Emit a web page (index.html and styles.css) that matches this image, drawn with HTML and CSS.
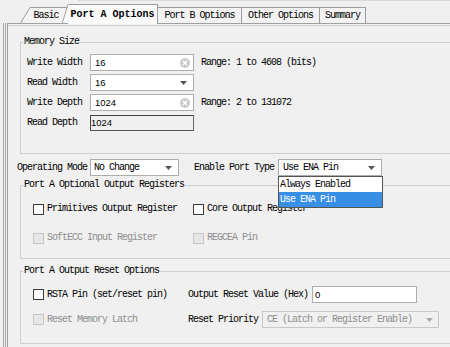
FILE: index.html
```html
<!DOCTYPE html>
<html>
<head>
<meta charset="utf-8">
<link rel="stylesheet" href="styles.css">
</head>
<body>
<div class="topline"></div>
<div class="tabs">
  <svg class="slant" width="10" height="16" viewBox="0 0 10 16"><polygon points="0,16 10,0 10,16" fill="#f3f3f3"/><path d="M0.5 16 L10 0.5" stroke="#9c9c9c" fill="none"/></svg>
  <div class="tab tab-basic">Basic</div>
  <svg class="slant" width="6" height="19" viewBox="0 0 6 19"><polygon points="0,3 5,3 0,19" fill="#f3f3f3"/><path d="M0 3.5 H5" stroke="#9c9c9c"/><polygon points="0,19 6,0 6,19" fill="#fafafa"/><path d="M0.3 19 L6 0.5" stroke="#9c9c9c" fill="none"/></svg>
  <div class="tab tab-sel">Port A Options</div>
  <div class="tab tab-b">Port B Options</div>
  <div class="tab tab-other">Other Options</div>
  <div class="tab tab-sum">Summary</div>
</div>
<div class="panel">
  <fieldset class="group mem">
    <legend>Memory Size</legend>
    <div class="rows">
      <span>Write Width</span>
      <div class="field"><span class="val">16</span><svg class="clear" width="10" height="10" viewBox="0 0 10 10"><circle cx="5" cy="5" r="5" fill="#cbcbcb"/><path d="M3 3L7 7M7 3L3 7" stroke="#fff" stroke-width="1.3"/></svg></div>
      <span class="range">Range: 1 to 4608 (bits)</span>
      <span>Read Width</span>
      <div class="sel"><span class="val">16</span><svg width="7" height="4" viewBox="0 0 7 4"><path d="M0 0H7L3.5 4Z" fill="#555"/></svg></div>
      <span></span>
      <span>Write Depth</span>
      <div class="field"><span class="val">1024</span><svg class="clear" width="10" height="10" viewBox="0 0 10 10"><circle cx="5" cy="5" r="5" fill="#cbcbcb"/><path d="M3 3L7 7M7 3L3 7" stroke="#fff" stroke-width="1.3"/></svg></div>
      <span class="range">Range: 2 to 131072</span>
      <span>Read Depth</span>
      <div class="ro"><span class="val">1024</span></div>
      <span></span>
    </div>
  </fieldset>

  <div class="oprow">
    <span>Operating Mode</span>
    <div class="sel sel-op"><span>No Change</span><svg width="7" height="4" viewBox="0 0 7 4"><path d="M0 0H7L3.5 4Z" fill="#555"/></svg></div>
    <span class="lbl-enable">Enable Port Type</span>
    <div class="combo">
      <div class="sel sel-en"><span>Use ENA Pin</span><svg width="7" height="4" viewBox="0 0 7 4"><path d="M0 0H7L3.5 4Z" fill="#555"/></svg></div>
      <div class="popup">
        <div class="opt">Always Enabled</div>
        <div class="opt hl">Use ENA Pin</div>
      </div>
    </div>
  </div>

  <fieldset class="group optg">
    <legend>Port A Optional Output Registers</legend>
    <div class="checks">
      <label class="chk"><span class="cb"></span>Primitives Output Register</label>
      <label class="chk"><span class="cb"></span>Core Output Register</label>
      <label class="chk dis"><span class="cb"></span>SoftECC Input Register</label>
      <label class="chk dis"><span class="cb"></span>REGCEA Pin</label>
    </div>
  </fieldset>

  <fieldset class="group resetg">
    <legend>Port A Output Reset Options</legend>
    <div class="resets">
      <label class="chk"><span class="cb"></span>RSTA Pin (set/reset pin)</label>
      <div class="pair"><span>Output Reset Value (Hex)</span><div class="field field-hex"><span class="val">0</span></div></div>
      <label class="chk dis"><span class="cb"></span>Reset Memory Latch</label>
      <div class="pair"><span>Reset Priority</span><div class="sel sel-dis"><span>CE (Latch or Register Enable)</span><svg width="7" height="4" viewBox="0 0 7 4"><path d="M0 0H7L3.5 4Z" fill="#a8a8a8"/></svg></div></div>
    </div>
  </fieldset>
</div>
</body>
</html>
```
FILE: styles.css
```css
html, body {
  margin: 0;
  padding: 0;
}
body {
  background: #f0f0f0;
  width: 450px;
  height: 347px;
  overflow: hidden;
  font-family: "Liberation Mono", monospace;
  font-size: 10px;
  letter-spacing: -1px;
  line-height: 12px;
  color: #000;
}
.topline {
  margin-left: 78px;
  border-top: 1px solid #d8d8d8;
}
.tabs {
  display: flex;
  align-items: flex-end;
  height: 22px;
  padding-left: 20px;
}
.slant {
  display: block;
  flex: none;
}
.tab {
  box-sizing: border-box;
  flex: none;
  height: 16px;
  border-top: 1px solid #9c9c9c;
  border-right: 1px solid #9c9c9c;
  background: #f3f3f3;
  text-align: center;
  line-height: 15px;
}
.tab-basic { width: 32px; border-right: none; }
.tab-sel {
  width: 90px;
  height: 20px;
  margin-bottom: -1px;
  position: relative;
  z-index: 1;
  background: #fafafa;
  font-weight: bold;
  letter-spacing: 0;
  line-height: 19px;
}
.tab-b { width: 84px; }
.tab-other { width: 78px; }
.tab-sum { width: 46px; }

.panel {
  margin-left: 7px;
  width: 442px;
  height: 323px;
  overflow: hidden;
  border-left: 1px solid #a0a0a0;
  border-top: 1px solid #a0a0a0;
  box-shadow: -1px 0 0 #f0f0f0, -2px 0 0 #a8a8a8, -3px 0 0 #f0f0f0, -4px 0 0 #a8a8a8,
    inset 0 1px 0 #f0f0f0, inset 0 2px 0 #cfcfcf;
}
.group {
  margin: 0 0 0 12px;
  padding: 0;
  width: 440px;
  box-sizing: border-box;
  min-width: 0;
  border: 1px solid #cdcdcd;
}
.group legend {
  margin-left: 2px;
  padding: 0 1px;
  line-height: 12px;
}
.mem { margin-top: 12px; }
.rows {
  display: grid;
  grid-template-columns: 63px 104px auto;
  grid-auto-rows: 17px;
  row-gap: 3px;
  align-items: center;
  padding: 6px 0 22px 6px;
}
.range { margin-left: 7px; }
.field, .sel, .ro {
  box-sizing: border-box;
  height: 17px;
  display: flex;
  align-items: center;
  background: #fff;
  border: 1px solid #adadad;
}
.field {
  justify-content: space-between;
  padding: 0 3px 0 4px;
}
.val {
  font-family: "Liberation Sans", sans-serif;
  font-size: 9.5px;
  letter-spacing: 0;
}
.clear { display: block; flex: none; }
.sel {
  justify-content: space-between;
  padding: 0 6px 0 4px;
}
.sel svg { display: block; flex: none; }
.ro {
  height: 16px;
  background: #f0f0f0;
  border: 1px solid #444;
  border-right-color: #666;
  border-bottom-color: #555;
  align-items: flex-end;
  padding: 0 0 1px 0;
}

.oprow {
  display: flex;
  align-items: center;
  height: 17px;
  margin-top: 5px;
  padding-left: 9px;
}
.sel-op {
  width: 89px;
  margin-left: 3px;
  padding-left: 3px;
}
.lbl-enable { margin-left: 15px; }
.combo {
  position: relative;
  margin-left: 4px;
}
.sel-en { width: 104px; }
.popup {
  position: absolute;
  left: 0;
  top: 100%;
  width: 105px;
  box-sizing: border-box;
  border: 1px solid #555;
  background: #fff;
  z-index: 2;
}
.opt {
  height: 15px;
  line-height: 15px;
  padding-left: 1px;
}
.opt.hl {
  background: #3790e6;
  color: #fff;
}

.optg { margin-top: 3px; }
.checks {
  display: grid;
  grid-template-columns: 160px auto;
  grid-auto-rows: 12px;
  row-gap: 17px;
  padding: 12px 0 14px 12px;
}
.chk {
  display: flex;
  align-items: center;
  white-space: nowrap;
}
.cb {
  box-sizing: border-box;
  width: 11px;
  height: 11px;
  flex: none;
  border: 1px solid #3a3a3a;
  background: #fff;
  margin-right: 3px;
}
.chk.dis { color: #8e8e8e; }
.chk.dis .cb {
  border-color: #c6c6c6;
  background: #e6e6e6;
}

.resetg { margin-top: 6px; }
.resets {
  display: grid;
  grid-template-columns: 155px auto;
  grid-auto-rows: 17px;
  row-gap: 8px;
  align-items: center;
  padding: 9px 0 15px 12px;
}
.pair {
  display: flex;
  align-items: center;
  white-space: nowrap;
}
.field-hex {
  width: 105px;
  margin-left: 4px;
  justify-content: flex-start;
  padding-left: 2px;
}
.sel-dis {
  width: 177px;
  margin-left: 4px;
  background: #f0f0f0;
  border-color: #c8c8c8;
  color: #8e8e8e;
  padding-right: 5px;
}
```
